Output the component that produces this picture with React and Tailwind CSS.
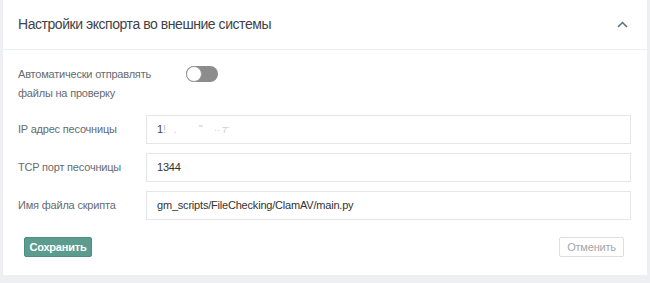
export default function App() {
  const font = { fontFamily: '"Liberation Sans", Arial, sans-serif' };
  return (
    <div className="w-[650px] h-[283px] bg-[#edeff3] pl-[3px] overflow-hidden" style={font}>
      <div className="w-[644px] bg-white">
        <div className="h-[50px] flex items-center justify-between pl-[15px] pr-[19px] border-b border-[#eeeff1]">
          <span className="text-[14px] tracking-[-0.45px] text-[#3f4347]">Настройки экспорта во внешние системы</span>
          <svg width="11" height="7" viewBox="0 0 11 7" fill="none">
            <path d="M1 6 L5.5 1.5 L10 6" stroke="#5b6e80" strokeWidth="1.5" />
          </svg>
        </div>
        <div className="pl-[15px] pr-[16px] pt-[15px] pb-[18px]">
          <div className="flex items-start">
            <div className="w-[168px] text-[11px] tracking-[-0.2px] leading-[19px] text-[#666b70]">
              Автоматически отправлять<br />файлы на проверку
            </div>
            <div className="mt-[1px] w-[32px] h-[16px] rounded-full bg-[#8c8c8c] relative">
              <div className="absolute left-0 top-0 w-[16px] h-[16px] rounded-full bg-white border border-[#9a9a9a]"></div>
            </div>
          </div>
          <div className="mt-[12px] flex flex-col gap-[9px]">
            {[
              ['IP адрес песочницы', '', 'ip'],
              ['TCP порт песочницы', '1344'],
              ['Имя файла скрипта', 'gm_scripts/FileChecking/ClamAV/main.py'],
            ].map(([l, v, k]) => (
              <div key={l} className="flex items-center">
                <div className="w-[128px] text-[11px] tracking-[-0.2px] text-[#666b70]">{l}</div>
                <div className="flex-1 h-[29px] border border-[#e4e6e9] flex items-center pl-[10px] text-[11px] tracking-[-0.2px] text-[#333]">
                  {k === 'ip' ? (
                    <span className="text-[#444]">1<span className="text-[#bbb]">!</span><span className="ml-[8px] text-[#ccc]">.</span><span className="ml-[22px] text-[#ccc]">˜</span><span className="ml-[12px] text-[#ccc] text-[9px]">·· 7ˉ</span></span>
                  ) : v}
                </div>
              </div>
            ))}
          </div>
          <div className="mt-[17px] flex justify-between pl-[6px]">
            <button className="w-[68px] h-[20px] rounded-[2px] bg-[#5c9c8e] border border-[#4f8d80] text-white text-[11px] tracking-[-0.2px] font-bold">Сохранить</button>
            <button className="w-[65px] h-[20px] rounded-[2px] bg-white border border-[#dcdee1] text-[#a3a7ab] text-[11px] tracking-[-0.2px] mr-[7px]">Отменить</button>
          </div>
        </div>
      </div>
    </div>
  );
}
